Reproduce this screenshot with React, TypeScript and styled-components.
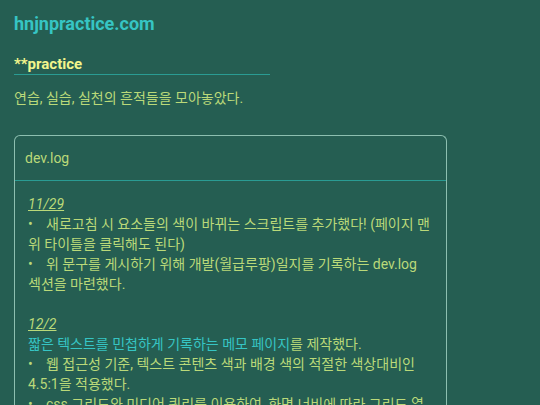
import React from "react";
import styled, { createGlobalStyle } from "styled-components";

const GlobalStyle = createGlobalStyle`
  html, body {
    margin: 0;
    padding: 0;
    background: #255e52;
  }
  body {
    font-family: Roboto, "Noto Sans CJK KR", sans-serif;
  }
`;

const Page = styled.div`
  padding: 14px 14px 0;
  color: #bad979;
  font-size: 14px;
  line-height: 20px;
  word-break: keep-all;
`;

const SiteTitle = styled.h1`
  margin: 0;
  font-size: 18px;
  line-height: 20px;
  font-weight: 700;
  color: #36c5c4;
  cursor: pointer;
`;

const SectionTitle = styled.h2`
  width: 256px;
  margin: 20px 0 0;
  font-size: 15px;
  line-height: 20px;
  font-weight: 700;
  color: #f2f58c;
  border-bottom: 1px solid #2a9c93;
`;

const Intro = styled.p`
  margin: 13px 0 0;
`;

const Card = styled.section`
  width: 431px;
  margin-top: 27px;
  border: 1px solid #8dbfb0;
  border-bottom: none;
  border-radius: 6px 6px 0 0;
`;

const CardHeader = styled.div`
  padding: 12px 10px;
  font-size: 14px;
  border-bottom: 1px solid #2a9c93;
`;

const CardBody = styled.div`
  padding: 13px 12px 0 13px;
`;

const Entry = styled.div`
  & + & {
    margin-top: 20px;
  }
`;

const EntryDate = styled.div`
  font-style: italic;
  text-decoration: underline;
`;

const Line = styled.div``;

const Bullet = styled.span`
  display: inline-block;
  width: 18px;
`;

const MemoLink = styled.a`
  color: #36c5c4;
  text-decoration: none;
`;

const entries = [
  {
    date: "11/29",
    lines: [
      "새로고침 시 요소들의 색이 바뀌는 스크립트를 추가했다! (페이지 맨 위 타이틀을 클릭해도 된다)",
      "위 문구를 게시하기 위해 개발(월급루팡)일지를 기록하는 dev.log 섹션을 마련했다.",
    ],
  },
  {
    date: "12/2",
    lead: true,
    lines: [
      "웹 접근성 기준, 텍스트 콘텐츠 색과 배경 색의 적절한 색상대비인 4.5:1을 적용했다.",
      "css 그리드와 미디어 쿼리를 이용하여, 화면 너비에 따라 그리드 열 개수가 바뀌도록 했다.",
    ],
  },
];

export default function App() {
  return (
    <>
      <GlobalStyle />
      <Page>
        <SiteTitle>hnjnpractice.com</SiteTitle>
        <SectionTitle>**practice</SectionTitle>
        <Intro>연습, 실습, 실천의 흔적들을 모아놓았다.</Intro>
        <Card>
          <CardHeader>dev.log</CardHeader>
          <CardBody>
            {entries.map((entry) => (
              <Entry key={entry.date}>
                <EntryDate>{entry.date}</EntryDate>
                {entry.lead && (
                  <Line>
                    <MemoLink href="#memo">짧은 텍스트를 민첩하게 기록하는 메모 페이지</MemoLink>를 제작했다.
                  </Line>
                )}
                {entry.lines.map((text) => (
                  <Line key={text}>
                    <Bullet>•</Bullet>
                    {text}
                  </Line>
                ))}
              </Entry>
            ))}
          </CardBody>
        </Card>
      </Page>
    </>
  );
}
